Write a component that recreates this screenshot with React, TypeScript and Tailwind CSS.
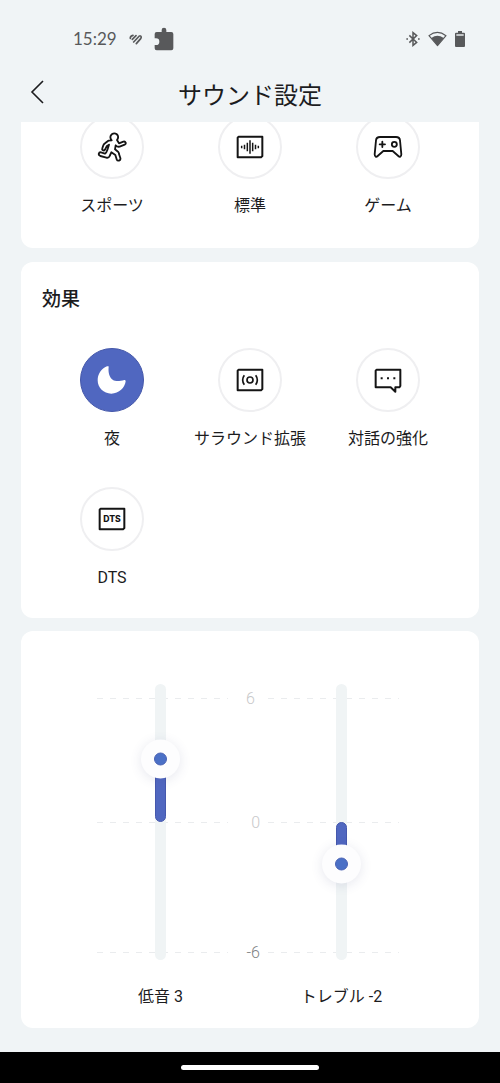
import { useState, type ReactNode } from "react";

function SportsIcon() {
  return (
    <svg viewBox="0 0 90 90" className="size-[30px]" fill="none" stroke="currentColor" strokeWidth="5.5" strokeLinejoin="round" strokeLinecap="round">
      <path d="M44 25C36 16 42 4 52 4s15 11 8 20l6 10 13-5c7-2 10 6 4 9l-15 6c-4 1-8 0-12-4l-2 12 9 7c2 2 3 4 3 7l4 12c2 8-8 11-11 4l-4-13-12-8-5 11c-2 5-6 6-10 5L10 72c-8-3-5-12 2-11l12 4c5-3 6-8 8-14l4-13-7 5-5 10c-4 5-10 1-8-4l3-9c1-3 3-5 6-7l9-7z" />
    </svg>
  );
}

function Frame({ children }: { children: ReactNode }) {
  return (
    <svg viewBox="0 0 84 72" className="h-6 w-7" fill="none" stroke="currentColor" strokeWidth="5">
      <path d="M8 5h71v58l-4 4H5V8z" strokeWidth="6" strokeLinejoin="round" />
      {children}
    </svg>
  );
}

function StandardIcon() {
  return (
    <Frame>
      <path d="M17 32v8M25.500 29v14M34 23v26M42 16v40M50 23v26M58.500 29v14M67 32v8" strokeWidth="4.500" />
    </Frame>
  );
}

function GameIcon() {
  return (
    <svg viewBox="0 0 90 72" className="h-6 w-[30px]" fill="none" stroke="currentColor" strokeWidth="5.500" strokeLinejoin="round" strokeLinecap="round">
      <path d="M21 6h48q11 0 12 10l4 42c0 8-5 9-9 5L59 48H31L14 63C10 67 5 66 5 58l4-42q1-10 12-10z" />
      <path d="M20 28h16M28 20v16" />
      <circle cx="64" cy="28" r="7.500" />
    </svg>
  );
}

function NightIcon() {
  return (
    <svg viewBox="0 0 90 90" className="size-[30px]" fill="currentColor">
      <path d="M35 6C33 22 37 37 47 44c9 6 20 5 35 1 3 0 4 2 4 4C84 68 66 86 43 86 20 86 2 68 2 46 2 28 13 11 30 4c3-1 6-1 5 2z" />
    </svg>
  );
}

function SurroundIcon() {
  return (
    <Frame>
      <circle cx="42" cy="36" r="9" />
      <path d="M25 22q-10 14 0 28M59 22q10 14 0 28" />
    </Frame>
  );
}

function DialogueIcon() {
  return (
    <svg viewBox="0 0 84 78" className="h-[26px] w-7 translate-y-px" fill="none" stroke="currentColor" strokeWidth="6" strokeLinejoin="round">
      <path d="M8 5h71v49l-3 4H64v13L50 58H5V8z" />
      <path d="M20 31h6M39 31h6M58 31h6" />
    </svg>
  );
}

function DtsIcon() {
  return (
    <Frame>
      <text x="42" y="45" textAnchor="middle" fill="currentColor" stroke="none" fontFamily="Inter, sans-serif" fontWeight="800" fontSize="26">
        DTS
      </text>
    </Frame>
  );
}

function ModeButton({ label, icon, active, onClick }: { label: string; icon: ReactNode; active: boolean; onClick: () => void }) {
  return (
    <button type="button" aria-pressed={active} onClick={onClick} className="flex flex-col items-center gap-[15px]">
      <span
        className={
          active
            ? "flex size-16 items-center justify-center rounded-full border border-[#4558aa] bg-[#5067c0] text-white"
            : "flex size-16 items-center justify-center rounded-full border-2 border-[#efeff1] bg-white text-[#141414]"
        }
      >
        {icon}
      </span>
      <span className="text-base leading-6 whitespace-nowrap">{label}</span>
    </button>
  );
}

function LevelSlider({ id, name, value, onChange }: { id: string; name: string; value: number; onChange: (v: number) => void }) {
  const zero = 50;
  const at = zero - value * 7.6;
  return (
    <div className="flex flex-col items-center gap-[25px]">
      <div className="relative h-[276px] w-10">
        <div className="mx-auto h-full w-[11px] rounded-full bg-[#f0f4f5]" />
        <div
          className="absolute inset-x-0 mx-auto w-[11px] rounded-full border border-[#4558ad] bg-[#5067c0]"
          style={{ top: `${Math.min(zero, at)}%`, height: `${Math.abs(at - zero)}%` }}
        />
        <div
          className="absolute inset-x-0 mx-auto flex size-[39px] -translate-y-1/2 items-center justify-center rounded-full bg-[#fdfdfe] shadow-[0_2px_12px_rgba(60,70,120,0.13)]"
          style={{ top: `${at}%` }}
        >
          <span className="size-[13px] rounded-full border border-[#4a62b4] bg-[#4b70c6]" />
        </div>
        <input
          id={id}
          type="range"
          min={-6}
          max={6}
          value={value}
          onChange={(e) => onChange(Number(e.target.value))}
          className="absolute inset-0 size-full cursor-pointer opacity-0 [direction:rtl] [writing-mode:vertical-lr]"
        />
      </div>
      <label htmlFor={id} className="text-base leading-6 whitespace-nowrap">
        {name} {value}
      </label>
    </div>
  );
}

const dashes =
  "h-px flex-1 bg-[repeating-linear-gradient(90deg,#eaecee_0px,#eaecee_6px,transparent_6px,transparent_13px)]";

function ScaleRow({ children, className }: { children: ReactNode; className: string }) {
  return (
    <div className={`flex h-5 items-center gap-2 ${className}`}>
      <span className={dashes} />
      <span className="w-6 pt-0.5 pl-2.5 text-base leading-5 font-light whitespace-nowrap">{children}</span>
      <span className={dashes} />
    </div>
  );
}

const presets = [
  { label: "スポーツ", icon: <SportsIcon /> },
  { label: "標準", icon: <StandardIcon /> },
  { label: "ゲーム", icon: <GameIcon /> },
];

const effects = [
  { label: "夜", icon: <NightIcon /> },
  { label: "サラウンド拡張", icon: <SurroundIcon /> },
  { label: "対話の強化", icon: <DialogueIcon /> },
  { label: "DTS", icon: <DtsIcon /> },
];

function StatusBar() {
  return (
    <div className="flex h-[78px] items-center justify-between pr-[35px] pl-[73px] text-[#58595b]">
      <div className="flex items-center">
        <span className="font-[Lato,sans-serif] text-[17px] leading-5">15:29</span>
        <svg viewBox="0 0 39 33" className="ml-3 h-[11px] w-[13px]" fill="none" stroke="currentColor" strokeWidth="5" strokeLinecap="round">
          <path d="M4 13Q3 6 12 4M10 16L21 5M14 24L31 6M22 29L35 14Q38 9 35 6" />
        </svg>
        <svg viewBox="0 0 60 72" className="ml-3 h-6 w-5" fill="currentColor">
          <path d="M8 15h15V9a7 7 0 0 1 14 0v6h15q6 0 6 6v43q0 6-6 6H8q-6 0-6-6V54h4a10 10 0 0 0 0-20H2V21q0-6 6-6z" />
        </svg>
      </div>
      <div className="flex items-center gap-2">
        <svg viewBox="0 0 42 48" className="h-4 w-3.5" fill="none" stroke="currentColor" strokeWidth="4.500">
          <path d="M10 13l22 21-11 9V5l11 9-22 21" />
          <path d="M1 24h5M36 24h5" strokeWidth="5" />
        </svg>
        <svg viewBox="0 0 57 48" className="h-4 w-[19px]" fill="none" stroke="currentColor">
          <path d="M3 14Q28 -6 54 14L28.500 44z" strokeWidth="3.500" strokeLinejoin="round" />
          <path d="M10 21Q28 7 47 21L28.500 44z" fill="currentColor" stroke="none" />
        </svg>
        <svg viewBox="0 0 30 48" className="h-4 w-2.5" fill="currentColor">
          <path d="M9 0h12v5h6q3 0 3 3v37q0 3-3 3H3q-3 0-3-3V8q0-3 3-3h6z" />
          <path d="M4 9h22v6H4z" fill="#c3c6c8" />
        </svg>
      </div>
    </div>
  );
}

export default function App() {
  const [preset, setPreset] = useState("");
  const [effect, setEffect] = useState("夜");
  const [bass, setBass] = useState(3);
  const [treble, setTreble] = useState(-2);

  return (
    <div className="flex min-h-screen flex-col bg-[#f0f4f6] font-[Roboto,'Noto_Sans_CJK_JP',sans-serif] text-[#1c1c1e]">
      <header>
        <StatusBar />
        <div className="grid grid-cols-[1fr_auto_1fr] items-start px-6 pb-2">
          <button type="button" aria-label="戻る" className="flex h-7 w-9 items-center pl-1.5">
            <svg viewBox="0 0 14 24" className="h-6 w-3.5" fill="none" stroke="#1c1c1e" strokeWidth="1.600">
              <path d="M13 1L2 12l11 11" />
            </svg>
          </button>
          <h1 className="text-2xl leading-9">サウンド設定</h1>
        </div>
      </header>

      <main className="flex flex-1 flex-col px-[21px] pb-6">
        <section className="overflow-hidden rounded-b-xl bg-white px-[22px] pb-[30px]">
          <div className="-mt-[7px] grid grid-cols-3">
            {presets.map((p) => (
              <ModeButton key={p.label} {...p} active={preset === p.label} onClick={() => setPreset(p.label)} />
            ))}
          </div>
        </section>

        <section className="mt-3.5 rounded-xl bg-white px-[22px] pt-6 pb-7">
          <h2 className="-ml-px text-[19px] leading-7 font-medium">効果</h2>
          <div className="mt-[34px] grid grid-cols-3 gap-y-9">
            {effects.map((e) => (
              <ModeButton key={e.label} {...e} active={effect === e.label} onClick={() => setEffect(e.label)} />
            ))}
          </div>
        </section>

        <section className="mt-[13px] rounded-xl bg-white pt-[53px] pr-[47px] pb-[19px] pl-[49px]">
          <div className="relative">
            <div className="absolute top-0 right-[33px] left-[27px] flex flex-col">
              <ScaleRow className="mt-1 text-[#c8c8ca]">6</ScaleRow>
              <ScaleRow className="mt-[104px] text-right text-[#c8c8ca]">0</ScaleRow>
              <ScaleRow className="mt-[110px] text-right text-[#808284]">-6</ScaleRow>
            </div>
            <div className="relative grid grid-cols-2">
              <LevelSlider id="bass" name="低音" value={bass} onChange={setBass} />
              <LevelSlider id="treble" name="トレブル" value={treble} onChange={setTreble} />
            </div>
          </div>
        </section>
      </main>

      <footer className="flex h-[31px] items-center justify-center bg-black">
        <div className="h-[5px] w-[138px] rounded-full bg-white" />
      </footer>
    </div>
  );
}
